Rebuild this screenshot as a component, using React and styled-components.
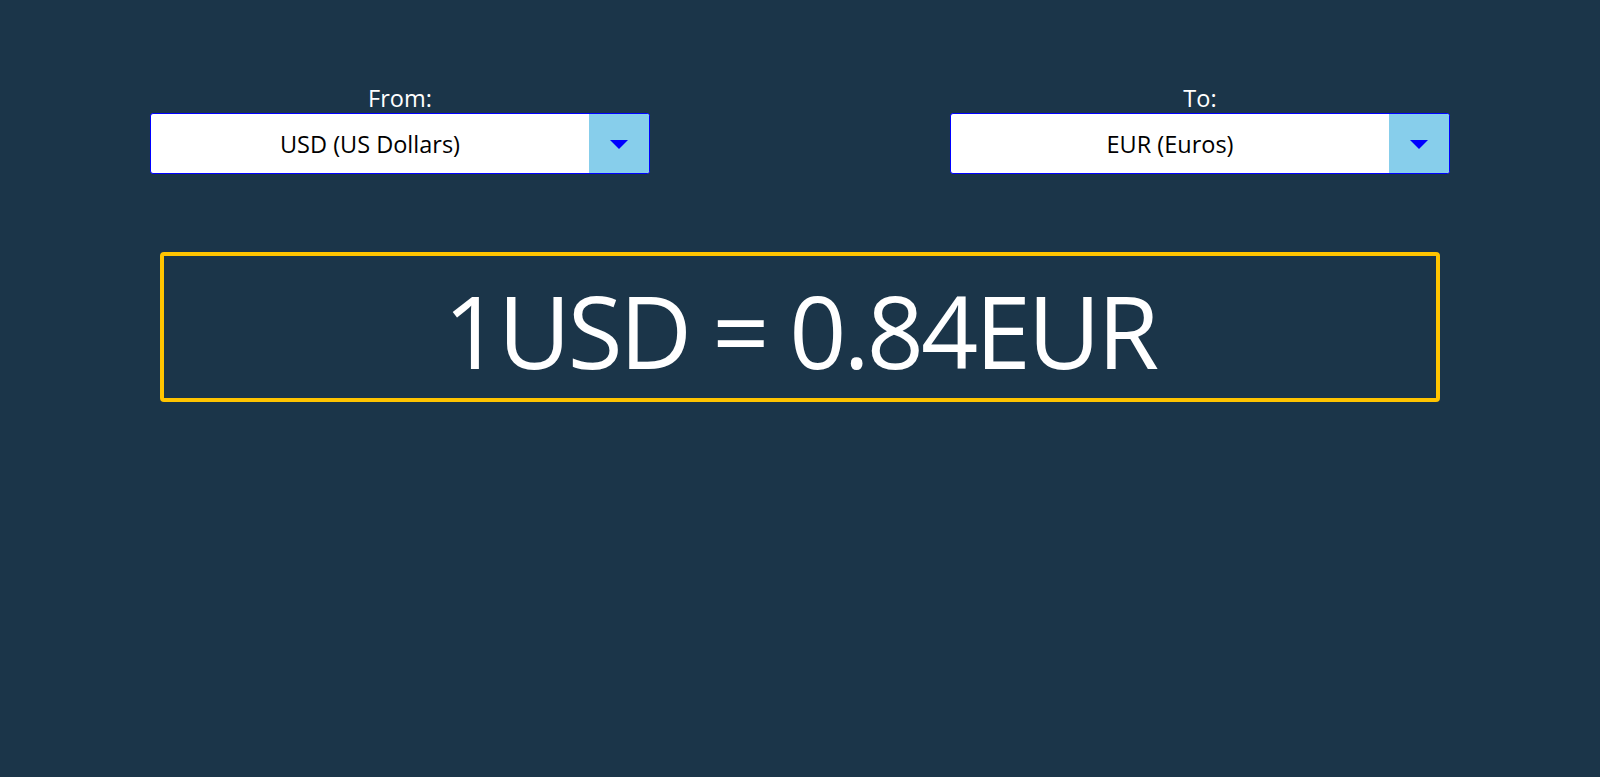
import React, { useState } from 'react';
import styled, { createGlobalStyle } from 'styled-components';

const GlobalStyle = createGlobalStyle`
    html, body {
        margin: 0;
        padding: 0;
        background: #1b3549;
        font-family: "Open Sans", "Noto Sans", sans-serif;
    }
`;

const Page = styled.div`
    min-height: 100vh;
    box-sizing: border-box;
    padding-top: 83px;
    background: #1b3549;
`;

const Selectors = styled.div`
    display: grid;
    grid-template-columns: 1fr 1fr;
`;

const Field = styled.div`
    display: flex;
    flex-direction: column;
    align-items: center;
`;

const Label = styled.label`
    font-size: 23.5px;
    line-height: 30px;
    color: #fff;
`;

const SelectBox = styled.div`
    display: flex;
    width: 500px;
    height: 61px;
    box-sizing: border-box;
    border: 1px solid #0000ff;
    border-radius: 3px;
    background: #fff;
    overflow: hidden;
`;

const Select = styled.select`
    flex: 1;
    appearance: none;
    border: none;
    outline: none;
    background: transparent;
    font-family: "Open Sans", "Noto Sans", sans-serif;
    font-size: 23.5px;
    color: #000;
    text-align: center;
    text-align-last: center;
    padding: 0;
    cursor: pointer;
`;

const ArrowBox = styled.div`
    width: 60px;
    display: flex;
    align-items: center;
    justify-content: center;
    background: #87ceeb;
    pointer-events: none;
`;

const Arrow = styled.span`
    width: 0;
    height: 0;
    border-left: 9px solid transparent;
    border-right: 9px solid transparent;
    border-top: 9px solid #0000ff;
    margin-top: 1px;
`;

const Result = styled.div`
    width: 80%;
    margin: 78px auto 0;
    height: 150px;
    box-sizing: border-box;
    border: 4px solid #ffc400;
    border-radius: 4px;
    display: flex;
    align-items: center;
    justify-content: center;
`;

const Rate = styled.h1`
    margin: 0;
    color: #fff;
    font-family: "Open Sans", "Noto Sans", sans-serif;
    font-weight: 400;
    font-size: 100px;
    letter-spacing: -3px;
    line-height: 1;
    padding-top: 6px;
`;

const currencies = {
    USD: 'US Dollars',
    EUR: 'Euros',
    GBP: 'British Pounds',
    JPY: 'Japanese Yen',
};

const rates = { USD: 1, EUR: 0.84, GBP: 0.73, JPY: 110.2 };

function CurrencySelect({ label, value, onChange }) {
    return (
        <Field>
            <Label>{label}</Label>
            <SelectBox>
                <Select value={value} onChange={(e) => onChange(e.target.value)}>
                    {Object.keys(currencies).map((code) => (
                        <option key={code} value={code}>
                            {code} ({currencies[code]})
                        </option>
                    ))}
                </Select>
                <ArrowBox>
                    <Arrow />
                </ArrowBox>
            </SelectBox>
        </Field>
    );
}

export default function App() {
    const [from, setFrom] = useState('USD');
    const [to, setTo] = useState('EUR');

    const value = Math.round((rates[to] / rates[from]) * 100) / 100;

    return (
        <Page>
            <GlobalStyle />
            <Selectors>
                <CurrencySelect label="From:" value={from} onChange={setFrom} />
                <CurrencySelect label="To:" value={to} onChange={setTo} />
            </Selectors>
            <Result>
                <Rate>
                    1{from} = {value}{to}
                </Rate>
            </Result>
        </Page>
    );
}
